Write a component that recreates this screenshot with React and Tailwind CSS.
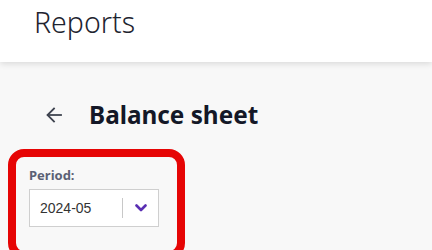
import React from "react";

export default function App() {
  return (
    <div className="w-[432px] h-[250px] overflow-hidden bg-[#f8f8f8]" style={{ fontFamily: '"Noto Sans", sans-serif' }}>
      <header className="h-[62px] bg-white shadow-[0_2px_6px_rgba(0,0,0,0.12)] relative z-10 pl-[34px] pt-[2px]">
        <h1 className="text-[28.5px] leading-[40px] font-light text-[#1e2430]">Reports</h1>
      </header>
      <main className="pt-[36px]">
        <div className="flex items-center h-[34px]">
          <div className="w-[89px] flex justify-start pl-[46px]">
            <svg width="16" height="16" viewBox="0 0 16 16" fill="none" stroke="#3f4450" strokeWidth="1.8" strokeLinecap="square">
              <path d="M15 8H2" />
              <path d="M8 1.5L1.5 8L8 14.5" />
            </svg>
          </div>
          <h2 className="text-[24.3px] font-bold text-[#141827] leading-none">Balance sheet</h2>
        </div>
        <div className="ml-[8px] mt-[17px] w-[177px] h-[110px] border-[8px] border-[#e60505] rounded-[16px] pl-[13px] pt-[9px]">
          <div className="text-[13px] font-bold text-[#5b6175] leading-[18px]">Period:</div>
          <div className="mt-[5px] w-[130px] h-[38px] bg-white border border-[#cfcfcf] flex items-center">
            <span className="pl-[10px] w-[92px] text-[14px] text-[#333] leading-none" style={{ fontFamily: '"Liberation Sans", sans-serif' }}>2024-05</span>
            <div className="w-px h-[20px] bg-[#c8c8c8]" />
            <div className="flex-1 flex justify-center">
              <svg width="12" height="8" viewBox="0 0 12 8" fill="none" stroke="#5a2fb3" strokeWidth="2.6" strokeLinecap="round" strokeLinejoin="round">
                <path d="M1.5 1.5L6 6L10.5 1.5" />
              </svg>
            </div>
          </div>
        </div>
      </main>
    </div>
  );
}
